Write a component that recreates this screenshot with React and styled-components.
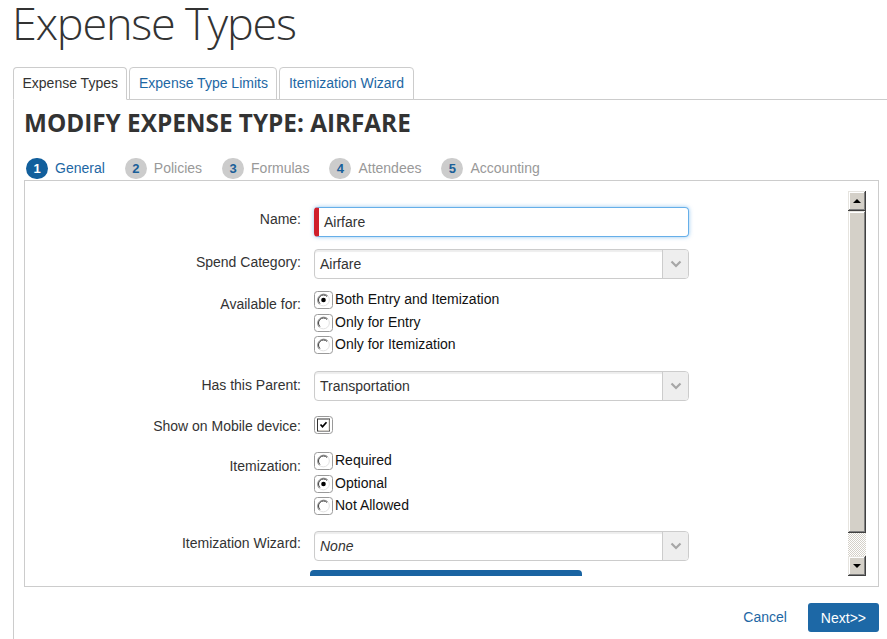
import React from "react";
import styled, { createGlobalStyle } from "styled-components";

const BLUE = "#1d67a4";

const GlobalStyle = createGlobalStyle`
  html, body { margin: 0; padding: 0; background: #fff; overflow: hidden; }
  body { font-family: "Liberation Sans", Arial, sans-serif; color: #333; font-size: 14px; }
  * { box-sizing: border-box; }
`;

const Page = styled.div`
  width: 887px;
  height: 639px;
  overflow: hidden;
  padding-left: 13px;
`;

const Title = styled.h1`
  margin: 0 0 0 -1px;
  font-family: "Open Sans", sans-serif;
  font-weight: 300;
  font-size: 45px;
  letter-spacing: -1.2px;
  line-height: 46px;
  color: #333;
`;

const TabBar = styled.div`
  display: flex;
  align-items: flex-end;
  gap: 2px;
  margin-top: 21px;
  margin-right: -1px;
  border-bottom: 1px solid #ccc;
`;

const Tab = styled.div`
  display: flex;
  align-items: center;
  height: 33px;
  margin-bottom: -1px;
  padding: 0 8.5px 1px;
  border: 1px solid #ccc;
  border-bottom-color: ${(p) => (p.$active ? "#fff" : "#ccc")};
  border-radius: 4px 4px 0 0;
  background: #fff;
  color: ${(p) => (p.$active ? "#333" : BLUE)};
  font-size: 14px;
  white-space: nowrap;
`;

const Panel = styled.div`
  border-left: 1px solid #ccc;
  padding: 8px 8px 0 10px;
  height: 540px;
`;

const Heading = styled.h2`
  margin: 0;
  font-family: "Open Sans", sans-serif;
  font-weight: 700;
  font-size: 24.3px;
  line-height: 30px;
  color: #333;
`;

const Steps = styled.div`
  display: flex;
  align-items: center;
  gap: 20px;
  margin-top: 19px;
  padding-left: 2px;
  height: 22px;
`;

const Step = styled.div`
  display: flex;
  align-items: center;
  gap: 7px;
  font-size: 14px;
  color: ${(p) => (p.$active ? BLUE : "#999")};
`;

const StepNum = styled.span`
  display: flex;
  align-items: center;
  justify-content: center;
  width: 22px;
  height: 21px;
  border-radius: 11px;
  background: ${(p) => (p.$active ? "#125f9c" : "#ccc")};
  color: ${(p) => (p.$active ? "#fff" : "#1a5f99")};
  font-weight: 700;
  font-size: 13px;
`;

const FormBox = styled.div`
  display: flex;
  height: 407px;
  margin-top: 1px;
  padding: 10px 12px 10px 0;
  border: 1px solid #ccc;
`;

const ScrollContent = styled.div`
  flex: 1;
  overflow: hidden;
  padding-top: 16px;
`;

const Field = styled.div`
  display: grid;
  grid-template-columns: 276px 375px;
  column-gap: 13px;
  margin-top: ${(p) => p.$mt || 0}px;
`;

const Label = styled.div`
  text-align: right;
  font-size: 14px;
  line-height: 16px;
  color: #333;
  padding-top: ${(p) => p.$pt || 0}px;
`;

const NameInput = styled.div`
  display: flex;
  align-items: center;
  height: 30px;
  padding-left: 5px;
  border: 1px solid #66afe9;
  border-left: 5px solid #cf1f2c;
  border-radius: 4px;
  box-shadow: 0 0 4px rgba(102, 175, 233, 0.7);
  font-size: 14px;
  color: #333;
`;

const SelectBox = styled.div`
  display: flex;
  height: 30px;
  border: 1px solid #ccc;
  border-radius: 4px;
  overflow: hidden;
  box-shadow: inset 0 2px 1px rgba(0, 0, 0, 0.07);
`;

const SelectText = styled.div`
  flex: 1;
  display: flex;
  align-items: center;
  padding-left: 5px;
  font-size: 14px;
  color: #333;
  font-style: ${(p) => (p.$italic ? "italic" : "normal")};
`;

const SelectArrow = styled.div`
  width: 26px;
  display: flex;
  align-items: center;
  justify-content: center;
  background: #eee;
  border-left: 1px solid #ccc;
`;

const OptionList = styled.div`
  display: flex;
  flex-direction: column;
`;

const Option = styled.div`
  display: flex;
  align-items: flex-start;
  gap: 2px;
  height: 22.5px;
  font-size: 14px;
  line-height: 17px;
  color: #111;
`;

const Frame = styled.svg`
  flex: 0 0 19px;
  width: 19px;
  height: 18px;
`;

const SubmitBar = styled.div`
  margin-top: 9px;
  margin-left: -4px;
  width: 272px;
  height: 30px;
  background: #1a64a2;
  border-radius: 4px;
`;

const Scrollbar = styled.div`
  flex: 0 0 18px;
  display: flex;
  flex-direction: column;
`;

const bevel = `
  background: #d4d0c8;
  box-shadow: inset -1px -1px #404040, inset 1px 1px #e6e4df, inset -2px -2px #808080, inset 2px 2px #fff;
`;

const ScrollBtn = styled.div`
  ${bevel}
  height: 20px;
  display: flex;
  align-items: center;
  justify-content: center;
`;

const Arrow = styled.span`
  width: 0;
  height: 0;
  border-left: 4px solid transparent;
  border-right: 4px solid transparent;
  ${(p) => (p.$down ? "border-top: 4px solid #000;" : "border-bottom: 4px solid #000;")}
`;

const Thumb = styled.div`
  ${bevel}
  height: 322px;
`;

const Track = styled.div`
  flex: 1;
  background-image: repeating-conic-gradient(#d4d0c8 0 25%, #fff 0 50%);
  background-size: 2px 2px;
`;

const Footer = styled.div`
  display: flex;
  justify-content: flex-end;
  align-items: center;
  gap: 21px;
  margin-top: 16px;
`;

const LinkBtn = styled.span`
  color: ${BLUE};
  font-size: 14px;
  margin-top: -2px;
`;

const PrimaryBtn = styled.div`
  display: flex;
  align-items: center;
  height: 29px;
  padding: 0 13px;
  border-radius: 3px;
  background: #1d68a6;
  color: #fff;
  font-size: 14px;
`;

const Chevron = () => (
  <svg width="12" height="8" viewBox="0 0 12 8">
    <path d="M1.5 1.5 L6 6 L10.5 1.5" fill="none" stroke="#a6a6a6" strokeWidth="2.2" />
  </svg>
);

const Select = ({ value, italic }) => (
  <SelectBox>
    <SelectText $italic={italic}>{value}</SelectText>
    <SelectArrow>
      <Chevron />
    </SelectArrow>
  </SelectBox>
);

const Radio = ({ checked }) => (
  <Frame viewBox="0 0 19 18">
    <rect x="0.5" y="0.5" width="18" height="17" rx="3" fill="#fff" stroke="#9a9a9a" />
    <circle cx="9.5" cy="9" r="6" fill="#fff" />
    <path d="M13.74 4.76 A6 6 0 0 1 5.26 13.24" fill="none" stroke="#e2e2e2" strokeWidth="1" />
    <path d="M5.26 13.24 A6 6 0 0 1 13.74 4.76" fill="none" stroke="#8a8a8a" strokeWidth="1" />
    <path d="M5.96 12.54 A5 5 0 0 1 13.04 5.46" fill="none" stroke="#404040" strokeWidth="1" />
    {checked && <circle cx="9.5" cy="9" r="2.3" fill="#000" />}
  </Frame>
);

const Checkbox = () => (
  <Frame viewBox="0 0 19 18">
    <rect x="0.5" y="0.5" width="18" height="17" rx="3" fill="#fff" stroke="#9a9a9a" />
    <rect x="3.5" y="3" width="12" height="12" fill="#fff" stroke="#333" />
    <path d="M4.5 14.5 H15 V3.5" fill="none" stroke="#d4d0c8" />
    <path d="M6.5 8.5 L8.5 10.8 L12.5 6.2" fill="none" stroke="#000" strokeWidth="1.7" />
  </Frame>
);

const RadioGroup = ({ options, selected }) => (
  <OptionList>
    {options.map((o) => (
      <Option key={o}>
        <Radio checked={o === selected} />
        {o}
      </Option>
    ))}
  </OptionList>
);

const steps = ["General", "Policies", "Formulas", "Attendees", "Accounting"];

export default function App() {
  return (
    <>
      <GlobalStyle />
      <Page>
        <Title>Expense Types</Title>
        <TabBar>
          <Tab $active>Expense Types</Tab>
          <Tab>Expense Type Limits</Tab>
          <Tab>Itemization Wizard</Tab>
        </TabBar>
        <Panel>
          <Heading>MODIFY EXPENSE TYPE: AIRFARE</Heading>
          <Steps>
            {steps.map((s, i) => (
              <Step key={s} $active={i === 0}>
                <StepNum $active={i === 0}>{i + 1}</StepNum>
                {s}
              </Step>
            ))}
          </Steps>
          <FormBox>
            <ScrollContent>
              <Field>
                <Label $pt={4}>Name:</Label>
                <NameInput>Airfare</NameInput>
              </Field>
              <Field $mt={12}>
                <Label $pt={5}>Spend Category:</Label>
                <Select value="Airfare" />
              </Field>
              <Field $mt={12}>
                <Label $pt={5}>Available for:</Label>
                <RadioGroup
                  options={["Both Entry and Itemization", "Only for Entry", "Only for Itemization"]}
                  selected="Both Entry and Itemization"
                />
              </Field>
              <Field $mt={12}>
                <Label $pt={6}>Has this Parent:</Label>
                <Select value="Transportation" />
              </Field>
              <Field $mt={15}>
                <Label $pt={2}>Show on Mobile device:</Label>
                <Option>
                  <Checkbox />
                </Option>
              </Field>
              <Field $mt={14}>
                <Label $pt={6}>Itemization:</Label>
                <RadioGroup options={["Required", "Optional", "Not Allowed"]} selected="Optional" />
              </Field>
              <Field $mt={11}>
                <Label $pt={4}>Itemization Wizard:</Label>
                <Select value="None" italic />
              </Field>
              <Field>
                <div />
                <SubmitBar />
              </Field>
            </ScrollContent>
            <Scrollbar>
              <ScrollBtn>
                <Arrow />
              </ScrollBtn>
              <Thumb />
              <Track />
              <ScrollBtn>
                <Arrow $down />
              </ScrollBtn>
            </Scrollbar>
          </FormBox>
          <Footer>
            <LinkBtn>Cancel</LinkBtn>
            <PrimaryBtn>Next&gt;&gt;</PrimaryBtn>
          </Footer>
        </Panel>
      </Page>
    </>
  );
}
